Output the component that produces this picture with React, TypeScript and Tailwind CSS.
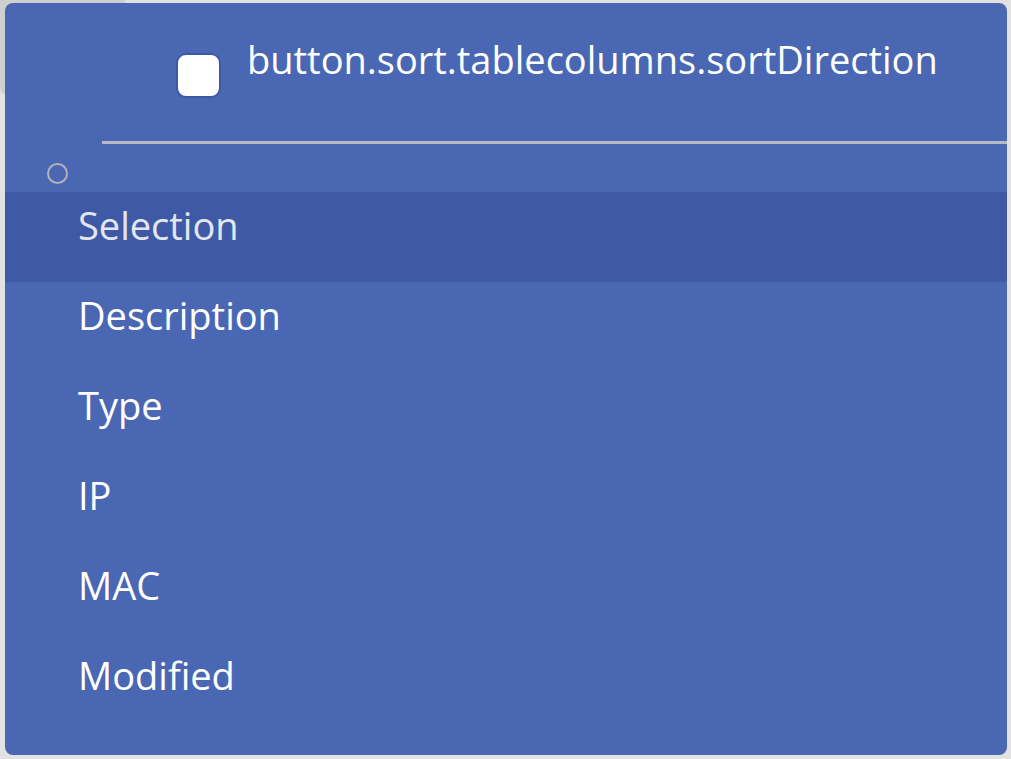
import React from "react";

const columns = ["Selection", "Description", "Type", "IP", "MAC", "Modified"];

export default function App() {
  return (
    <div className="relative h-[759px] w-[1011px] overflow-hidden bg-[#e2e2e2] font-['Open_Sans',sans-serif]">
      {/* shadowed element behind the panel */}
      <div className="absolute left-0 top-0 h-[95px] w-[125px] rounded-bl-lg bg-[#cfcfcf]" aria-hidden="true" />

      <div className="relative ml-[5px] mt-[3px] flex h-[752px] w-[1002px] flex-col rounded-lg bg-[#4a67b4]">
        <div className="flex h-[138px] items-start pl-[171px] pt-[37px]">
          <div className="mt-[13px] size-[45px] rounded-[10px] border-2 border-[#3d58a4] bg-white" />
          <span className="ml-[26px] text-[38px] leading-[38px] text-white">
            button.sort.tablecolumns.sortDirection
          </span>
        </div>
        <div className="ml-[97px] h-[3px] bg-[#b6b8c6]" />
        <div className="flex h-[48px] items-start pl-[42px] pt-[19px]">
          <div className="size-[21px] rounded-full border-[2.5px] border-[#b2b2b8]" />
        </div>
        {columns.map((c, i) => (
          <div
            key={c}
            className={
              i === 0
                ? "h-[90px] bg-[#3e5aa6] pl-[73px] pt-[14px] text-[38px] leading-[38px] text-[#e4e6ee]"
                : "h-[90px] pl-[73px] pt-[14px] text-[38px] leading-[38px] text-white"
            }
          >
            {c}
          </div>
        ))}
      </div>
    </div>
  );
}
